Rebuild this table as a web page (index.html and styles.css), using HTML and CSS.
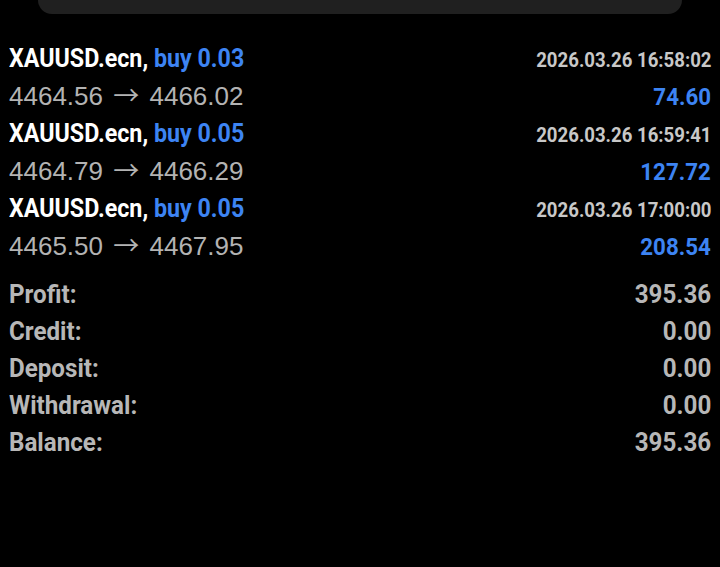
FILE: index.html
```html
<!DOCTYPE html>
<html lang="en">
<head>
    <meta charset="UTF-8">
    <meta name="viewport" content="width=device-width, initial-scale=1.0">
    <title>History</title>
    <link rel="stylesheet" href="styles.css">
</head>
<body>

    <!-- Top panel (cut off) -->
    <div class="top-panel"></div>

    <!-- Closed deals -->
    <div class="deals">
        <div class="deal">
            <div class="deal-line">
                <span class="symbol">XAUUSD.ecn, <span class="side">buy 0.03</span></span>
                <span class="time">2026.03.26 16:58:02</span>
            </div>
            <div class="deal-line">
                <span class="prices">4464.56 <span class="arrow">→</span> 4466.02</span>
                <span class="profit">74.60</span>
            </div>
        </div>
        <div class="deal">
            <div class="deal-line">
                <span class="symbol">XAUUSD.ecn, <span class="side">buy 0.05</span></span>
                <span class="time">2026.03.26 16:59:41</span>
            </div>
            <div class="deal-line">
                <span class="prices">4464.79 <span class="arrow">→</span> 4466.29</span>
                <span class="profit">127.72</span>
            </div>
        </div>
        <div class="deal">
            <div class="deal-line">
                <span class="symbol">XAUUSD.ecn, <span class="side">buy 0.05</span></span>
                <span class="time">2026.03.26 17:00:00</span>
            </div>
            <div class="deal-line">
                <span class="prices">4465.50 <span class="arrow">→</span> 4467.95</span>
                <span class="profit">208.54</span>
            </div>
        </div>
    </div>

    <!-- Totals -->
    <div class="summary">
        <div class="summary-row"><span class="label">Profit:</span><span class="value">395.36</span></div>
        <div class="summary-row"><span class="label">Credit:</span><span class="value">0.00</span></div>
        <div class="summary-row"><span class="label">Deposit:</span><span class="value">0.00</span></div>
        <div class="summary-row"><span class="label">Withdrawal:</span><span class="value">0.00</span></div>
        <div class="summary-row"><span class="label">Balance:</span><span class="value">395.36</span></div>
    </div>

</body>
</html>
```

FILE: styles.css
```css
body {
    margin: 0;
    background-color: #000;
    font-family: Roboto, "Liberation Sans", sans-serif;
    overflow: hidden;
}

/* Panel peeking in from the top */
.top-panel {
    height: 14px;
    margin: 0 38px;
    background: #202020;
    border-radius: 0 0 22px 22px;
}

/* Deals list */
.deals {
    margin-top: 26px;
    padding: 0 9px;
}

.deal-line {
    display: flex;
    justify-content: space-between;
    align-items: baseline;
    height: 37.5px;
    line-height: 37.5px;
}

/* bold text is a condensed face in the app */
.symbol,
.time,
.profit,
.label,
.value {
    display: inline-block;
    font-weight: bold;
    transform: scaleX(0.93);
}

.symbol,
.label {
    transform-origin: left center;
}

.time,
.profit,
.value {
    transform-origin: right center;
}

.symbol {
    font-size: 25px;
    color: #fff;
}

.side {
    color: #3d84f3;
}

.time {
    font-size: 20px;
    color: #c8c8c8;
}

.prices {
    font-family: "Liberation Sans", Roboto, sans-serif;
    font-size: 26px;
    color: #b3b3b3;
}

.arrow {
    margin: 0 3px;
    font-family: "Noto Sans CJK JP", "DejaVu Sans", sans-serif;
    font-size: 26px;
    line-height: 0;
}

.profit {
    font-size: 24px;
    color: #3d84f3;
}

/* Totals */
.summary {
    margin-top: 11px;
    padding: 0 9px;
}

.summary-row {
    display: flex;
    justify-content: space-between;
    height: 37px;
    line-height: 37px;
    font-size: 26px;
    color: #b7b7b7;
}
```
